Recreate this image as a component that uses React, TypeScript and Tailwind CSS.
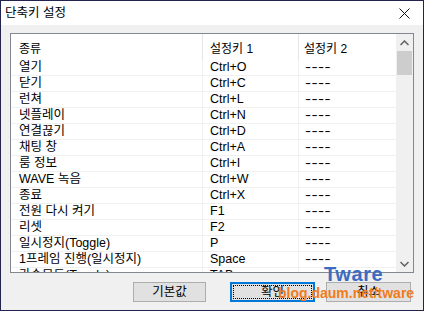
import React from 'react';

const rows: [string, string][] = [
  ['열기', 'Ctrl+O'],
  ['닫기', 'Ctrl+C'],
  ['런쳐', 'Ctrl+L'],
  ['넷플레이', 'Ctrl+N'],
  ['연결끊기', 'Ctrl+D'],
  ['채팅 창', 'Ctrl+A'],
  ['룸 정보', 'Ctrl+I'],
  ['WAVE 녹음', 'Ctrl+W'],
  ['종료', 'Ctrl+X'],
  ['전원 다시 켜기', 'F1'],
  ['리셋', 'F2'],
  ['일시정지(Toggle)', 'P'],
  ['1프레임 진행(일시정지)', 'Space'],
  ['가속모드(Toggle)', 'TAB'],
];

const font = { fontFamily: '"Liberation Sans", "Noto Sans CJK KR", sans-serif' };

export default function App() {
  return (
    <div className="w-[424px] h-[311px] border border-[#23234f] flex flex-col text-[12px] text-black relative overflow-hidden" style={font}>
      {/* title bar */}
      <div className="h-[24px] bg-white flex items-center justify-between pl-[4px] pr-[13px] shrink-0">
        <span className="text-[12.5px]">단축키 설정</span>
        <svg width="11" height="11" viewBox="0 0 11 11">
          <path d="M0.5 0.5 L10.5 10.5 M10.5 0.5 L0.5 10.5" stroke="#111" strokeWidth="1" />
        </svg>
      </div>

      {/* body */}
      <div className="flex-1 bg-[#f0f0f0] pt-[8px] px-[9px] flex flex-col">
        <div className="h-[240px] border border-[#828790] bg-white flex overflow-hidden">
          <div className="flex-1 flex flex-col overflow-hidden">
            <div className="h-[26px] shrink-0 flex items-center">
              <div className="w-[191px] pl-[8px] pt-[3px]">종류</div>
              <div className="w-[96px] h-full border-l border-[#e5e5e5] pl-[7px] pt-[3px] flex items-center">설정키 1</div>
              <div className="flex-1 h-full border-l border-[#e5e5e5] pl-[5px] pt-[3px] flex items-center">설정키 2</div>
            </div>
            {rows.map(([name, key], i) => (
              <div key={i} className="h-[16px] shrink-0 flex items-center border-b border-[#f0f0f0] text-[12.5px]">
                <div className="w-[191px] pl-[8px] whitespace-nowrap">{name}</div>
                <div className="w-[96px] h-full border-l border-[#f0f0f0] pl-[7px] flex items-center">{key}</div>
                <div className="flex-1 h-full border-l border-[#f0f0f0] pl-[6px] flex items-center">
                  <span className="inline-block origin-left scale-x-[1.45] tracking-[0.3px]">----</span>
                </div>
              </div>
            ))}
          </div>
          {/* scrollbar */}
          <div className="w-[17px] bg-[#f0f0f0] flex flex-col items-center shrink-0">
            <div className="h-[17px] w-full flex items-center justify-center">
              <svg width="9" height="6" viewBox="0 0 9 6">
                <path d="M0.5 5 L4.5 1 L8.5 5" stroke="#606060" strokeWidth="1.5" fill="none" />
              </svg>
            </div>
            <div className="w-[15px] h-[24px] bg-[#cdcdcd]" />
            <div className="flex-1" />
            <div className="h-[17px] w-full flex items-center justify-center">
              <svg width="9" height="6" viewBox="0 0 9 6">
                <path d="M0.5 1 L4.5 5 L8.5 1" stroke="#606060" strokeWidth="1.5" fill="none" />
              </svg>
            </div>
          </div>
        </div>

        {/* buttons */}
        <div className="flex mt-[9px] pl-[123px]">
          <button className="w-[73px] h-[20px] bg-[#e1e1e1] border border-[#adadad] text-[12.5px] leading-none">기본값</button>
          <button className="ml-[24px] w-[85px] h-[20px] bg-[#e1e1e1] border-2 border-[#0078d7] p-[1px] text-[12.5px] leading-none">
            <span className="w-full h-full flex items-center justify-center border border-dotted border-black">확인</span>
          </button>
          <button className="ml-[11px] w-[85px] h-[20px] bg-[#e1e1e1] border border-[#adadad] text-[12.5px] leading-none">취소</button>
        </div>
      </div>

      {/* watermark */}
      <div className="absolute left-[323px] top-[263px] text-[20px] font-bold text-[#3b6cc2] leading-none tracking-[0.6px]" style={{ fontFamily: '"Liberation Sans", sans-serif' }}>Tware</div>
      <div className="absolute left-[277px] top-[285px] text-[14px] font-bold text-[#f07c1c] leading-none" style={{ fontFamily: '"Liberation Sans", sans-serif' }}>blog.daum.net/tware</div>
    </div>
  );
}
